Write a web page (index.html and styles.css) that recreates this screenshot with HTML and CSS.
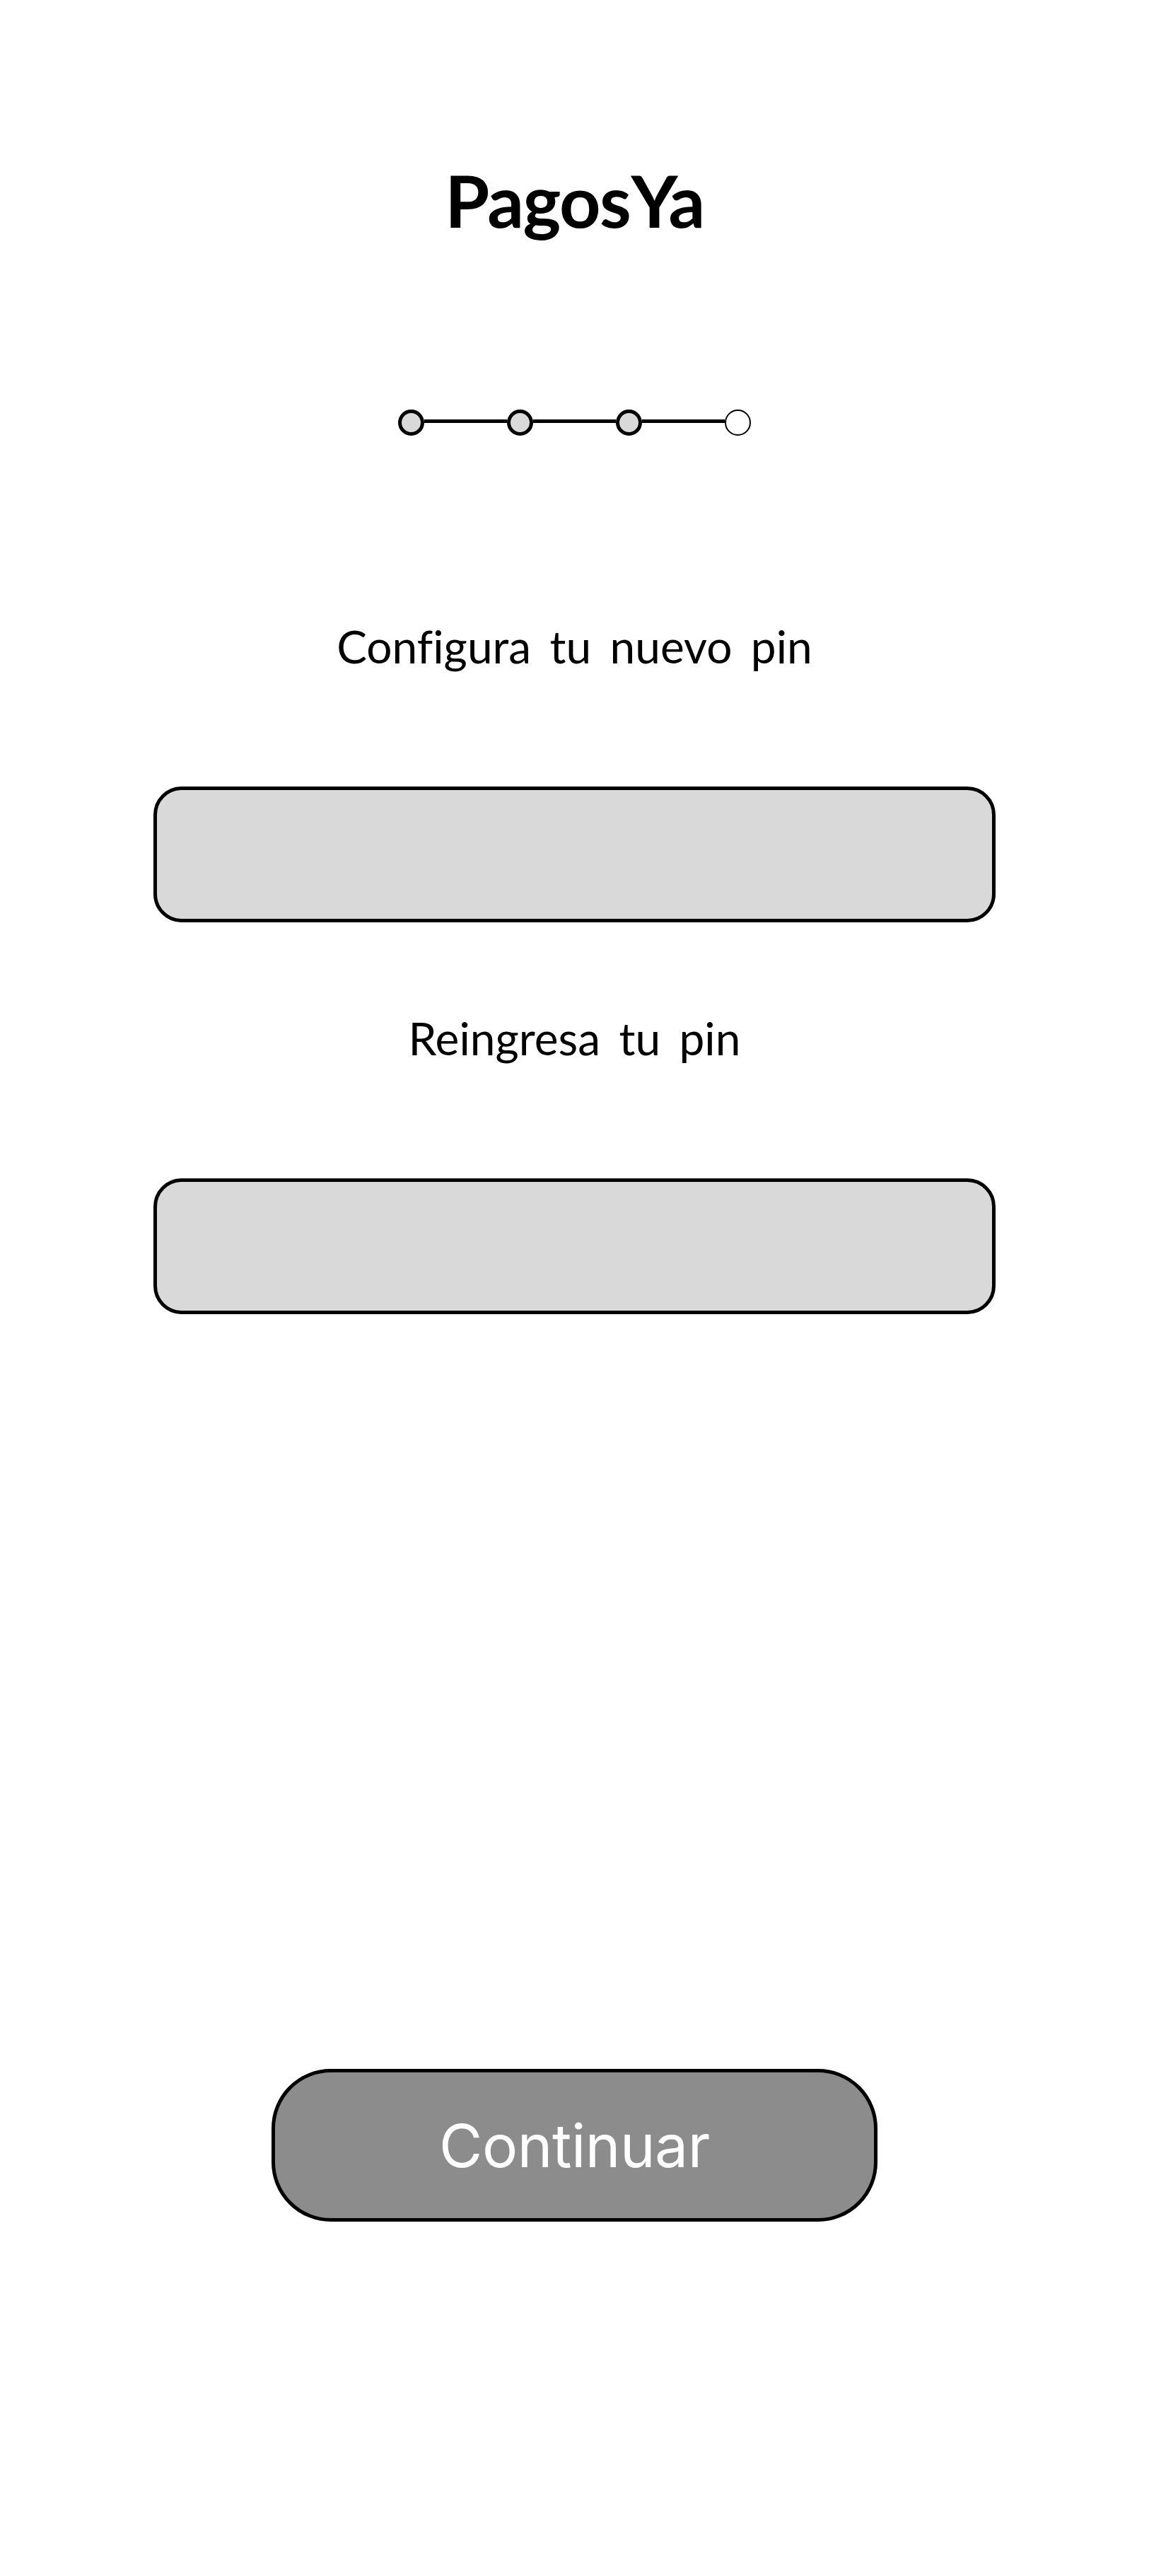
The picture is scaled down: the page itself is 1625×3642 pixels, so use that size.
FILE: index.html
```html
<!DOCTYPE html>
<html lang="es">
<head>
    <meta charset="UTF-8">
    <meta name="viewport" content="width=device-width, initial-scale=1.0">
    <title>PagosYa - Configura tu pin</title>
    <link rel="stylesheet" href="styles.css">
</head>
<body>
    <main class="screen">
        <h1 class="logo">Pagos<span class="logo-ya">Ya</span></h1>

        <div class="stepper">
            <span class="dot done"></span>
            <span class="link"></span>
            <span class="dot done"></span>
            <span class="link"></span>
            <span class="dot done"></span>
            <span class="link"></span>
            <span class="dot"></span>
        </div>

        <form class="pin-form">
            <label class="pin-label first" for="newPin">Configura tu nuevo pin</label>
            <input class="pin-input" type="password" id="newPin" name="newPin">

            <label class="pin-label" for="repeatPin">Reingresa tu pin</label>
            <input class="pin-input" type="password" id="repeatPin" name="repeatPin">

            <button class="continue" type="button">Continuar</button>
        </form>
    </main>
</body>
</html>
```

FILE: styles.css
```css
html, body {
    margin: 0;
    padding: 0;
    background: #fff;
}
.screen {
    height: 3642px;
    display: flex;
    flex-direction: column;
    align-items: center;
    color: #000;
}
.logo {
    margin: 220px 0 0;
    font-family: "Lato", sans-serif;
    font-size: 102px;
    font-weight: 700;
    line-height: 126px;
    letter-spacing: -1.5px;
}
.logo-ya {
    margin-left: 1px;
}
.stepper {
    margin-top: 233px;
    display: flex;
    align-items: center;
}
.dot {
    width: 37px;
    height: 37px;
    box-sizing: border-box;
    border: 5px solid #000;
    border-radius: 50%;
    background: #d9d9d9;
}
.dot:last-child {
    border-width: 2px;
    background: #fff;
}
.link {
    width: 117px;
    height: 5px;
    margin-bottom: 4px;
    background: #000;
}
.pin-form {
    display: flex;
    flex-direction: column;
    align-items: center;
}
.pin-label {
    margin-top: 125px;
    font-family: "Lato", sans-serif;
    font-size: 64px;
    font-weight: 400;
    line-height: 78px;
    word-spacing: 10px;
    font-variant-ligatures: none;
}
.pin-label.first {
    margin-top: 259px;
}
.pin-input {
    display: block;
    width: 1191px;
    height: 192px;
    margin-top: 159px;
    box-sizing: border-box;
    border: 5px solid #000;
    border-radius: 40px;
    background: #d9d9d9;
}
.continue {
    width: 857px;
    height: 216px;
    margin-top: 1067px;
    box-sizing: border-box;
    border: 5px solid #000;
    border-radius: 84px;
    background: #8c8c8c;
    color: #fff;
    font-family: "Inter", sans-serif;
    font-size: 84px;
    font-weight: 400;
    letter-spacing: -0.5px;
}
```
